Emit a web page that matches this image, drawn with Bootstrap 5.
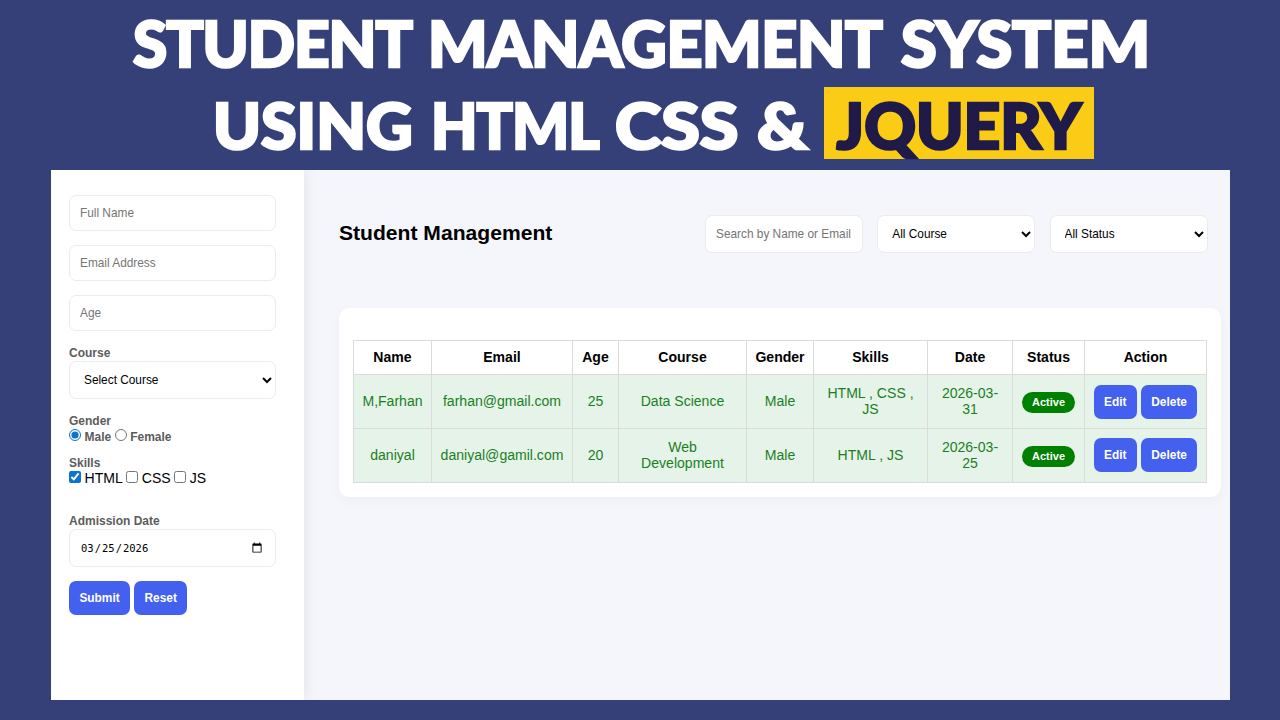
<!DOCTYPE html>
<html lang="en">
<head>
  <meta charset="UTF-8">
  <meta name="viewport" content="width=device-width, initial-scale=1">
  <title>Student Management</title>
  <!-- Bootstrap CSS -->
  <link href="https://cdn.jsdelivr.net/npm/bootstrap@5.3.0/dist/css/bootstrap.min.css" rel="stylesheet">
  <style>
    body {
      width: 1280px;
      height: 720px;
      background-color: #344077;
      font-family: "Liberation Sans", Arial, sans-serif;
      font-size: 14.05px;
      line-height: 16px;
      color: #000;
    }
    /* Banner */
    .banner {
      height: 170px;
      padding-top: 3px;
      font-family: Lato, sans-serif;
      font-weight: 900;
      font-size: 62px;
      line-height: 80px;
      color: #fff;
      -webkit-text-stroke: 2.6px currentColor;
    }
    .banner-line { height: 82px; white-space: nowrap; }
    .banner-line span { display: block; flex: none; transform-origin: left; }
    .line-one { padding-left: 133px; }
    .line-two { padding-left: 213px; }
    .w-student { width: 295px; letter-spacing: -1px; }
    .w-manage { width: 473px; letter-spacing: -.3px; transform: scaleX(1.01); }
    .w-system { transform: scaleX(1.045); }
    .w-using { width: 218px; transform: scaleX(1.04); }
    .w-html { width: 184px; letter-spacing: -1px; transform: scaleX(.97); }
    .w-css { width: 142px; transform: scaleX(1.13); }
    .w-amp { width: 67px; transform: scaleX(1.12); }
    .banner-line .tag {
      width: 270px;
      height: 72px;
      margin-top: 2px;
      line-height: 76px;
      background-color: #fbcc16;
      color: #1f1a48;
    }
    .banner-line .w-jquery { transform: scaleX(1.03); transform-origin: center; }
    /* App window */
    .app {
      width: 1178.5px;
      height: 530px;
      margin-left: 51px;
      background-color: #f4f6fb;
    }
    .sidebar {
      width: 253px;
      flex: none;
      padding: 25px 28px 0 18px;
      background-color: #fff;
      box-shadow: 2px 0 12px rgba(0, 0, 0, .07);
      clip-path: inset(0 -20px 0 0);
    }
    .field {
      height: 36px;
      padding: 0 10px;
      border: 1px solid #ececee;
      border-radius: 7px;
      font-size: 11.85px;
      line-height: 16px;
      color: #000;
    }
    .field::placeholder { color: #757575; }
    .pick {
      height: 38px;
      appearance: auto;
    }
    .gap-field { margin-bottom: 14px; }
    .date-field {
      padding-left: 11px;
      font-family: "DejaVu Sans Mono", monospace;
      font-size: 10.5px;
    }
    .date-field::-webkit-datetime-edit-text { padding: 0 1px; }
    .date-field::-webkit-calendar-picker-indicator { width: 12px; height: 12px; }
    .title-label {
      display: block;
      font-size: 12px;
      font-weight: bold;
      line-height: 16px;
      color: #5c5c5c;
    }
    .skills-label { margin-top: 10px; }
    .date-label { margin-top: 26px; }
    .choice {
      height: 16px;
      display: flex;
      align-items: center;
    }
    .choice input {
      width: 12px;
      height: 12px;
      margin: 0 3.5px 4px 0;
      accent-color: #0b74cc;
    }
    .choice label { margin: -2px 3.5px 0 0; }
    .choice-bold label {
      margin-top: 0;
      font-size: 12px;
      font-weight: bold;
      color: #5c5c5c;
    }
    .act {
      height: 34px;
      padding: 0 10.4px;
      border: 0;
      border-radius: 7px;
      background-color: #4460ee;
      color: #fff;
      font-size: 11.9px;
      font-weight: bold;
      line-height: 34px;
    }
    .act:hover { background-color: #3650d8; color: #fff; }
    /* Main area */
    .content { padding: 45px 0 0 35px; }
    .top { height: 38px; }
    .top h2 { font-size: 21.1px; font-weight: bold; line-height: 36px; width: 366px; }
    .filters { gap: 14.3px; }
    .filters .field { width: 158px; height: 38px; }
    .panel {
      width: 882px;
      height: 189px;
      margin-top: 55px;
      padding: 32px 14px 0;
      border-radius: 11px;
      background-color: #fff;
      box-shadow: 0 4px 12px rgba(0, 0, 0, .03);
    }
    .students {
      width: 853px;
      table-layout: fixed;
      border-collapse: collapse;
      text-align: center;
    }
    .students th, .students td {
      padding: 0 0 2px;
      border: 1px solid #d9dcda;
      vertical-align: middle;
    }
    .students th { height: 34px; }
    .students td { height: 54px; background-color: #e6f3e9; color: #1a801f; }
    .students tr:first-child td:last-child { padding-bottom: 0; }
    .pill {
      display: block;
      width: 53px;
      height: 21px;
      margin: 3px auto 0;
      border-radius: 11px;
      background-color: #008000;
      color: #fff;
      font-size: 11px;
      font-weight: bold;
      line-height: 21px;
    }
  </style>
</head>
<body class="overflow-hidden">

<header class="banner">
  <div class="banner-line line-one d-flex">
    <span class="w-student">STUDENT</span>
    <span class="w-manage">MANAGEMENT</span>
    <span class="w-system">SYSTEM</span>
  </div>
  <div class="banner-line line-two d-flex">
    <span class="w-using">USING</span>
    <span class="w-html">HTML</span>
    <span class="w-css">CSS</span>
    <span class="w-amp">&amp;</span>
    <span class="tag text-center"><span class="w-jquery">JQUERY</span></span>
  </div>
</header>

<div class="app d-flex">
  <!-- Student form -->
  <aside class="sidebar">
    <form>
      <input type="text" class="form-control field gap-field" placeholder="Full Name">
      <input type="email" class="form-control field gap-field" placeholder="Email Address">
      <input type="number" class="form-control field gap-field" placeholder="Age">

      <label for="course" class="title-label">Course</label>
      <select id="course" class="form-control field pick gap-field">
        <option selected>Select Course</option>
        <option>Data Science</option>
        <option>Web Development</option>
      </select>

      <span class="title-label">Gender</span>
      <div class="choice choice-bold">
        <input type="radio" name="gender" id="male" checked><label for="male">Male</label>
        <input type="radio" name="gender" id="female"><label for="female">Female</label>
      </div>

      <span class="title-label skills-label">Skills</span>
      <div class="choice">
        <input type="checkbox" id="html" checked><label for="html">HTML</label>
        <input type="checkbox" id="css"><label for="css">CSS</label>
        <input type="checkbox" id="js"><label for="js">JS</label>
      </div>

      <label for="date" class="title-label date-label">Admission Date</label>
      <input type="date" id="date" class="form-control field pick date-field gap-field" value="2026-03-25">

      <div class="d-flex gap-1">
        <button type="button" class="btn act">Submit</button>
        <button type="reset" class="btn act">Reset</button>
      </div>
    </form>
  </aside>

  <!-- Student list -->
  <main class="content">
    <div class="top d-flex">
      <h2 class="m-0">Student Management</h2>
      <div class="filters d-flex">
        <input type="text" class="form-control field" placeholder="Search by Name or Email">
        <select class="form-control field pick"><option>All Course</option></select>
        <select class="form-control field pick"><option>All Status</option></select>
      </div>
    </div>

    <div class="panel">
      <table class="students">
        <colgroup>
          <col width="78"><col width="141"><col width="46"><col width="128"><col width="67"><col width="114"><col width="85"><col width="72"><col width="122">
        </colgroup>
        <thead>
          <tr>
            <th>Name</th><th>Email</th><th>Age</th><th>Course</th><th>Gender</th><th>Skills</th><th>Date</th><th>Status</th><th>Action</th>
          </tr>
        </thead>
        <tbody>
          <tr>
            <td>M,Farhan</td>
            <td>farhan@gmail.com</td>
            <td>25</td>
            <td>Data Science</td>
            <td>Male</td>
            <td>HTML , CSS ,<br>JS</td>
            <td>2026-03-<br>31</td>
            <td><span class="pill">Active</span></td>
            <td><div class="d-flex justify-content-center gap-1"><button class="btn act">Edit</button><button class="btn act">Delete</button></div></td>
          </tr>
          <tr>
            <td>daniyal</td>
            <td>daniyal@gamil.com</td>
            <td>20</td>
            <td>Web<br>Development</td>
            <td>Male</td>
            <td>HTML , JS</td>
            <td>2026-03-<br>25</td>
            <td><span class="pill">Active</span></td>
            <td><div class="d-flex justify-content-center gap-1"><button class="btn act">Edit</button><button class="btn act">Delete</button></div></td>
          </tr>
        </tbody>
      </table>
    </div>
  </main>
</div>

<!-- Bootstrap JS -->
<script src="https://cdn.jsdelivr.net/npm/bootstrap@5.3.0/dist/js/bootstrap.bundle.min.js"></script>
</body>
</html>
